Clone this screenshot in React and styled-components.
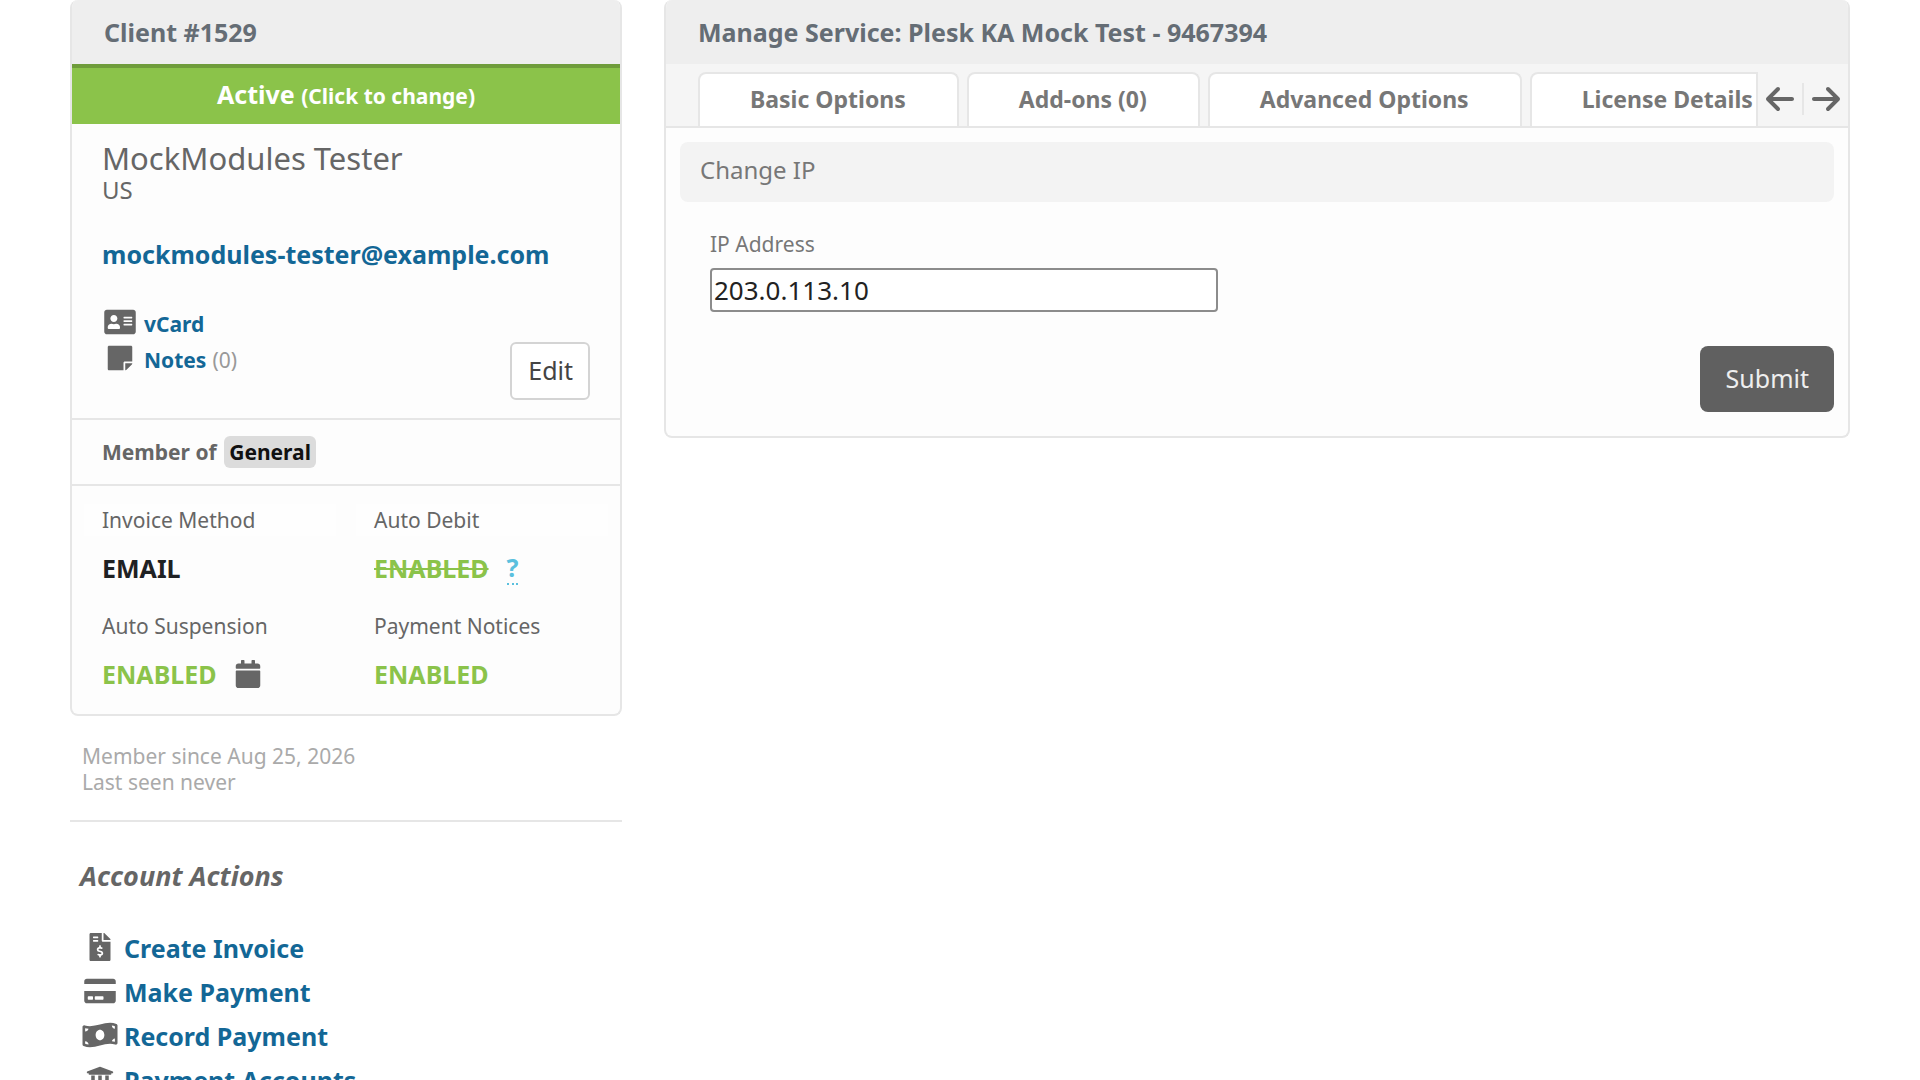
import React, { useState } from "react";
import styled, { createGlobalStyle } from "styled-components";
import {
  FaAddressCard,
  FaStickyNote,
  FaCalendar,
  FaFileInvoiceDollar,
  FaCreditCard,
  FaMoneyBillWave,
  FaUniversity,
} from "react-icons/fa";
import { FaArrowLeft, FaArrowRight } from "react-icons/fa6";

const TABS = [
  "Basic Options",
  "Add-ons (0)",
  "Advanced Options",
  "License Details",
];

const ACTIONS = [
  { label: "Create Invoice", icon: FaFileInvoiceDollar },
  { label: "Make Payment", icon: FaCreditCard },
  { label: "Record Payment", icon: FaMoneyBillWave },
  { label: "Payment Accounts", icon: FaUniversity },
];

function ClientCard() {
  return (
    <Card>
      <CardHeader>Client #1529</CardHeader>
      <StatusButton type="button">
        Active <small>(Click to change)</small>
      </StatusButton>
      <Contact>
        <ClientName>MockModules Tester</ClientName>
        <Country>US</Country>
        <Email href="mailto:mockmodules-tester@example.com">
          mockmodules-tester@example.com
        </Email>
        <ContactFooter>
          <IconList>
            <li>
              <IconBox>
                <FaAddressCard />
              </IconBox>
              <a href="#vcard">vCard</a>
            </li>
            <li>
              <IconBox>
                <FaStickyNote />
              </IconBox>
              <a href="#notes">Notes</a>
              <Count>(0)</Count>
            </li>
          </IconList>
          <EditButton type="button">Edit</EditButton>
        </ContactFooter>
      </Contact>
      <MemberOf>
        Member of <Badge>General</Badge>
      </MemberOf>
      <Settings>
        <Setting>
          <SettingLabel $lit>Invoice Method</SettingLabel>
          <SettingValue $color="#1f2123">EMAIL</SettingValue>
        </Setting>
        <Setting>
          <SettingLabel $lit>Auto Debit</SettingLabel>
          <SettingValue>
            <s>ENABLED</s>
            <Help title="Auto debit is not available">?</Help>
          </SettingValue>
        </Setting>
        <Setting>
          <SettingLabel>Auto Suspension</SettingLabel>
          <SettingValue>
            ENABLED
            <CalendarButton type="button" aria-label="Schedule">
              <FaCalendar />
            </CalendarButton>
          </SettingValue>
        </Setting>
        <Setting>
          <SettingLabel>Payment Notices</SettingLabel>
          <SettingValue>ENABLED</SettingValue>
        </Setting>
      </Settings>
    </Card>
  );
}

function ServiceCard() {
  const [ip, setIp] = useState("203.0.113.10");

  return (
    <Card>
      <CardHeader>Manage Service: Plesk KA Mock Test - 9467394</CardHeader>
      <TabBar>
        <TabList>
          {TABS.map((tab) => (
            <Tab key={tab} type="button">
              {tab}
            </Tab>
          ))}
        </TabList>
        <TabArrows>
          <button type="button" aria-label="Previous tabs">
            <FaArrowLeft />
          </button>
          <button type="button" aria-label="Next tabs">
            <FaArrowRight />
          </button>
        </TabArrows>
      </TabBar>
      <Form onSubmit={(e) => e.preventDefault()}>
        <SectionTitle>Change IP</SectionTitle>
        <Field>
          <label htmlFor="ip">IP Address</label>
          <input
            id="ip"
            type="text"
            value={ip}
            onChange={(e) => setIp(e.target.value)}
          />
        </Field>
        <SubmitButton type="submit">Submit</SubmitButton>
      </Form>
    </Card>
  );
}

function App() {
  return (
    <>
      <GlobalStyle />
      <Page>
        <aside>
          <ClientCard />
          <Since>
            Member since Aug 25, 2026
            <br />
            Last seen never
          </Since>
          <ActionsTitle>Account Actions</ActionsTitle>
          <ActionList>
            {ACTIONS.map(({ label, icon: Icon }) => (
              <li key={label}>
                <IconBox>
                  <Icon />
                </IconBox>
                <a href="#action">{label}</a>
              </li>
            ))}
          </ActionList>
        </aside>
        <main>
          <ServiceCard />
        </main>
      </Page>
    </>
  );
}

const GlobalStyle = createGlobalStyle`
  * {
    box-sizing: border-box;
  }
  html {
    height: 100%;
    overflow: hidden;
  }
  body {
    margin: 0;
    background: #ffffff;
    color: #666666;
    font-family: "Noto Sans", sans-serif;
    font-size: 25px;
    line-height: 32px;
  }
  a {
    color: #136796;
    font-weight: 700;
    text-decoration: none;
  }
  button,
  input {
    font: inherit;
  }
  button {
    cursor: pointer;
  }
`;

const Page = styled.div`
  display: grid;
  grid-template-columns: 552fr 1186fr;
  gap: 42px;
  align-items: start;
  padding: 0 70px;
  main,
  aside {
    min-width: 0;
  }
`;

const Card = styled.section`
  background: #fdfdfd;
  border: 2px solid #e6e6e6;
  border-top: 0;
  border-radius: 8px;
  overflow: hidden;
`;

const CardHeader = styled.h2`
  margin: 0 -2px;
  padding: 16px 34px;
  background: #eeeeee;
  color: #656d75;
  font-size: 25px;
  font-weight: 700;
`;

const StatusButton = styled.button`
  display: block;
  width: 100%;
  padding: 10px 12px 14px;
  background: #8bc34a;
  border: 0;
  border-top: 4px solid #6f9c3b;
  color: #ffffff;
  font-weight: 700;
  small {
    font-size: 21px;
    line-height: 1;
  }
`;

const Contact = styled.div`
  padding: 16px 30px 18px;
`;

const ClientName = styled.h3`
  margin: 0;
  font-size: 31px;
  line-height: 36px;
  font-weight: 400;
`;

const Country = styled.div`
  font-size: 24px;
  line-height: 28px;
`;

const Email = styled.a`
  display: block;
  margin-top: 34px;
`;

const ContactFooter = styled.div`
  display: flex;
  align-items: flex-end;
  justify-content: space-between;
  margin-top: 36px;
`;

const IconBox = styled.span`
  display: flex;
  align-items: center;
  flex: none;
  padding-bottom: 2px;
  color: #666666;
  svg {
    width: 36px;
    height: 28px;
  }
`;

const IconList = styled.ul`
  margin: 0 0 22px;
  padding: 0;
  list-style: none;
  font-size: 21px;
  li {
    display: flex;
    gap: 6px;
    height: 36px;
    line-height: 36px;
  }
  ${IconBox} {
    padding-bottom: 4px;
  }
`;

const Count = styled.span`
  color: #999999;
`;

const EditButton = styled.button`
  padding: 10px 15px 12px 16px;
  background: #ffffff;
  border: 2px solid #d4d4d4;
  border-radius: 6px;
  color: #444444;
`;

const MemberOf = styled.div`
  padding: 16px 30px;
  border-top: 2px solid #e6e6e6;
  border-bottom: 2px solid #e6e6e6;
  font-size: 21px;
  font-weight: 700;
`;

const Badge = styled.span`
  margin-left: 2px;
  padding: 2px 5px;
  background: #dcdcdc;
  border-radius: 6px;
  color: #111111;
`;

const Settings = styled.div`
  display: grid;
  grid-template-columns: 1fr 1fr;
  gap: 26px 20px;
  padding: 18px 12px 24px;
`;

const Setting = styled.div`
  min-width: 0;
`;

const SettingLabel = styled.div`
  padding: 0 18px;
  background: ${({ $lit }) => ($lit ? "#fefefe" : "none")};
  font-size: 21px;
`;

const SettingValue = styled.div`
  display: flex;
  align-items: center;
  gap: 18px;
  height: 32px;
  margin-top: 16px;
  padding: 0 18px;
  color: ${({ $color }) => $color || "#8bc34a"};
  font-weight: 700;
`;

const Help = styled.abbr`
  border-bottom: 2px dotted #5bc0de;
  color: #5bc0de;
  text-decoration: none;
`;

const CalendarButton = styled.button`
  display: flex;
  padding: 0;
  background: none;
  border: 0;
  color: #666666;
  svg {
    width: 26px;
    height: 28px;
  }
`;

const Since = styled.p`
  margin: 0;
  padding: 27px 12px 25px;
  border-bottom: 2px solid #e6e6e6;
  color: #aaaaaa;
  font-size: 21px;
  line-height: 26px;
`;

const ActionsTitle = styled.h3`
  margin: 38px 0 34px;
  padding: 0 10px;
  font-size: 27px;
  font-style: italic;
  font-weight: 700;
`;

const ActionList = styled.ul`
  margin: 0;
  padding: 0 12px;
  list-style: none;
  li {
    display: flex;
    gap: 6px;
    height: 44px;
    line-height: 44px;
  }
`;

const TabBar = styled.div`
  display: flex;
  background: #f5f5f5;
  border-bottom: 2px solid #e6e6e6;
  padding: 8px 0 0 32px;
`;

const TabList = styled.div`
  display: flex;
  flex: 1;
  gap: 8px;
  min-width: 0;
  overflow: hidden;
  border-right: 2px solid #e6e6e6;
`;

const Tab = styled.button`
  flex: none;
  padding: 9px 51px 11px 50px;
  background: #ffffff;
  border: 2px solid #e6e6e6;
  border-bottom: 0;
  border-radius: 8px 8px 0 0;
  color: #777777;
  font-size: 23px;
  font-weight: 700;
`;

const TabArrows = styled.div`
  display: flex;
  align-items: center;
  button {
    display: flex;
    padding: 0 8px;
    background: none;
    border: 0;
    color: #666666;
  }
  svg {
    width: 28px;
    height: 32px;
  }
  button + button {
    border-left: 2px solid #e6e6e6;
  }
`;

const Form = styled.form`
  display: flex;
  flex-direction: column;
  padding: 14px 14px 24px;
`;

const SectionTitle = styled.h3`
  margin: 0;
  padding: 12px 20px 16px;
  background: #f3f3f3;
  border-radius: 8px;
  color: #777777;
  font-size: 24px;
  font-weight: 400;
`;

const Field = styled.div`
  width: 44%;
  margin: 26px 30px 34px;
  label {
    display: block;
    margin-bottom: 8px;
    color: #777777;
    font-size: 21px;
  }
  input {
    display: block;
    width: 100%;
    padding: 4px 2px;
    background: #ffffff;
    border: 2px solid #8c8c8c;
    border-radius: 4px;
    color: #222222;
    font-size: 26px;
  }
`;

const SubmitButton = styled.button`
  align-self: flex-end;
  padding: 16px 25px 18px 26px;
  background: #606060;
  border: 0;
  border-radius: 8px;
  color: #eeeeee;
`;

export default App;
